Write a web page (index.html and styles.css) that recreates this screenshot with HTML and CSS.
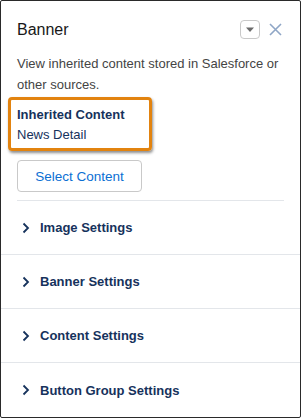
FILE: index.html
```html
<!DOCTYPE html>
<html>
<head>
<meta charset="utf-8">
<link rel="stylesheet" href="styles.css">
</head>
<body>
<div class="panel">
  <div class="header">
    <h1 class="title">Banner</h1>
    <div class="actions">
      <button class="menu-btn" aria-label="menu">
        <svg width="10" height="6" viewBox="0 0 10 6"><path d="M1 0.5h8L5 5z" fill="#6b6b6b"/></svg>
      </button>
      <button class="close-btn" aria-label="close">
        <svg width="13" height="13" viewBox="0 0 13 13"><path d="M1 1L12 12M12 1L1 12" stroke="#8fa6c6" stroke-width="1.6" fill="none"/></svg>
      </button>
    </div>
  </div>
  <p class="desc">View inherited content stored in Salesforce or other sources.</p>
  <div class="highlight">
    <div class="inh-title">Inherited Content</div>
    <div class="inh-value">News Detail</div>
  </div>
  <div class="select-wrap">
    <button class="select-btn">Select Content</button>
  </div>
  <div class="sections">
    <div class="section"><span class="chev"><svg width="8" height="12" viewBox="0 0 8 12"><path d="M1.5 1.5L6 6l-4.5 4.5" stroke="#16325c" stroke-width="1.8" fill="none"/></svg></span>Image Settings</div>
    <div class="section"><span class="chev"><svg width="8" height="12" viewBox="0 0 8 12"><path d="M1.5 1.5L6 6l-4.5 4.5" stroke="#16325c" stroke-width="1.8" fill="none"/></svg></span>Banner Settings</div>
    <div class="section"><span class="chev"><svg width="8" height="12" viewBox="0 0 8 12"><path d="M1.5 1.5L6 6l-4.5 4.5" stroke="#16325c" stroke-width="1.8" fill="none"/></svg></span>Content Settings</div>
    <div class="section"><span class="chev"><svg width="8" height="12" viewBox="0 0 8 12"><path d="M1.5 1.5L6 6l-4.5 4.5" stroke="#16325c" stroke-width="1.8" fill="none"/></svg></span>Button Group Settings</div>
  </div>
</div>
</body>
</html>
```
FILE: styles.css
```css
* { box-sizing: border-box; }
html, body { margin: 0; padding: 0; background: #fff; }
body { font-family: "Liberation Sans", Arial, sans-serif; }
.panel {
  width: 301px;
  height: 418px;
  border: 1px solid #2a2a2a;
  border-radius: 2px;
  overflow: hidden;
  background: #fff;
}
.header {
  display: flex;
  align-items: center;
  justify-content: space-between;
  padding: 19px 18px 0 16px;
  height: 38px;
}
.title {
  margin: 0;
  font-size: 16px;
  font-weight: normal;
  color: #181818;
}
.actions { display: flex; align-items: center; gap: 8px; }
.menu-btn {
  width: 20px;
  height: 19px;
  border: 1px solid #c9c9c9;
  border-radius: 4px;
  background: #fff;
  padding: 0;
  display: flex;
  align-items: center;
  justify-content: center;
}
.close-btn {
  border: 0;
  background: none;
  padding: 0;
  width: 14px;
  height: 14px;
  display: flex;
  align-items: center;
  justify-content: center;
}
.desc {
  margin: 14px 16px 0 16px;
  font-size: 13px;
  line-height: 21px;
  color: #444;
}
.highlight {
  margin: 2px 0 0 7px;
  width: 144px;
  height: 54px;
  border: 3px solid #e2830f;
  border-radius: 4px;
  box-shadow: 1px 2px 3px rgba(0,0,0,0.45);
  padding: 5px 0 0 6px;
}
.inh-title {
  font-size: 13px;
  font-weight: bold;
  color: #16325c;
  line-height: 20px;
}
.inh-value {
  font-size: 13px;
  color: #16325c;
  line-height: 20px;
}
.select-wrap {
  margin: 9px 16px 0 16px;
  padding-bottom: 8px;
  border-bottom: 1px solid #e3e6ea;
}
.select-btn {
  width: 125px;
  height: 32px;
  border: 1px solid #c9c9c9;
  border-radius: 4px;
  background: #fff;
  color: #0b6fd3;
  font-family: "Liberation Sans", Arial, sans-serif;
  font-size: 13.5px;
  padding: 0;
}
.section {
  display: flex;
  align-items: center;
  height: 54px;
  padding-left: 21px;
  font-size: 13px;
  font-weight: bold;
  color: #16325c;
  border-bottom: 1px solid #e3e6ea;
}
.section:last-child { border-bottom: 0; }
.chev { display: flex; width: 18px; }
```
